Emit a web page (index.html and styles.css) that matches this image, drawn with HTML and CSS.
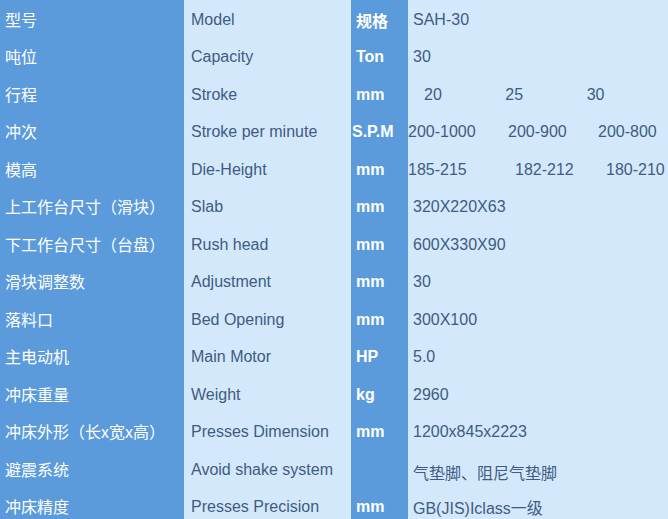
FILE: index.html
```html
<!DOCTYPE html>
<html lang="zh-CN">
<head>
<meta charset="utf-8">
<title>SAH-30 规格</title>
<link rel="stylesheet" href="styles.css">
</head>
<body>
<div class="spec">
  <div class="c1">型号</div><div class="c2">Model</div><div class="c3">规格</div><div class="c4">SAH-30</div>
  <div class="c1">吨位</div><div class="c2">Capacity</div><div class="c3">Ton</div><div class="c4">30</div>
  <div class="c1">行程</div><div class="c2">Stroke</div><div class="c3">mm</div><div class="c4 multi r3"><span>20</span><span>25</span><span>30</span></div>
  <div class="c1">冲次</div><div class="c2">Stroke per minute</div><div class="c3 spm">S.P.M</div><div class="c4 multi r4"><span>200-1000</span><span>200-900</span><span>200-800</span></div>
  <div class="c1">模高</div><div class="c2">Die-Height</div><div class="c3">mm</div><div class="c4 multi r5"><span>185-215</span><span>182-212</span><span>180-210</span></div>
  <div class="c1">上工作台尺寸（滑块）</div><div class="c2">Slab</div><div class="c3">mm</div><div class="c4">320X220X63</div>
  <div class="c1">下工作台尺寸（台盘）</div><div class="c2">Rush head</div><div class="c3">mm</div><div class="c4">600X330X90</div>
  <div class="c1">滑块调整数</div><div class="c2">Adjustment</div><div class="c3">mm</div><div class="c4">30</div>
  <div class="c1">落料口</div><div class="c2">Bed Opening</div><div class="c3">mm</div><div class="c4">300X100</div>
  <div class="c1">主电动机</div><div class="c2">Main Motor</div><div class="c3">HP</div><div class="c4">5.0</div>
  <div class="c1">冲床重量</div><div class="c2">Weight</div><div class="c3">kg</div><div class="c4">2960</div>
  <div class="c1">冲床外形（长x宽x高）</div><div class="c2">Presses Dimension</div><div class="c3">mm</div><div class="c4">1200x845x2223</div>
  <div class="c1">避震系统</div><div class="c2">Avoid shake system</div><div class="c3"></div><div class="c4 low">气垫脚、阻尼气垫脚</div>
  <div class="c1">冲床精度</div><div class="c2">Presses Precision</div><div class="c3">mm</div><div class="c4">GB(JIS)Iclass一级</div>
</div>
</body>
</html>
```
FILE: styles.css
```css
html, body {
  margin: 0;
  padding: 0;
  background: #d4e8fb;
}
.spec {
  display: grid;
  grid-template-columns: 184px 167px 57px 1fr;
  grid-auto-rows: 37.5px;
  width: 668px;
  font-family: "Liberation Sans", Arial, "Noto Sans CJK SC", sans-serif;
  font-size: 16px;
  color: #3e5c82;
}
.spec > div {
  display: flex;
  align-items: center;
  white-space: nowrap;
  overflow: hidden;
  box-sizing: border-box;
}
.c1 {
  background: #5b9bdc;
  color: #ffffff;
  padding-left: 5px;
  font-family: "Noto Sans CJK SC", "Liberation Sans", sans-serif;
  font-size: 16px;
}
.c2 {
  background: #d4e8fb;
  padding-left: 7px;
  padding-top: 2px;
}
.c3 {
  background: #5b9bdc;
  color: #ffffff;
  font-weight: bold;
  padding-left: 5px;
  padding-top: 2px;
  font-family: "Liberation Sans", "Noto Sans CJK SC", sans-serif;
}
.c3.spm {
  padding-left: 1px;
}
.c4 {
  background: #d4e8fb;
  padding-left: 5px;
  padding-top: 2px;
}
.c4.low {
  padding-top: 6px;
}
.multi span {
  display: inline-block;
}
.r3 { padding-left: 16px; }
.r3 span { width: 81.5px; }
.r4 { padding-left: 0; }
.r4 span:nth-child(1) { width: 100px; }
.r4 span:nth-child(2) { width: 90px; }
.r5 { padding-left: 0; }
.r5 span:nth-child(1) { width: 107px; }
.r5 span:nth-child(2) { width: 91px; }
```
